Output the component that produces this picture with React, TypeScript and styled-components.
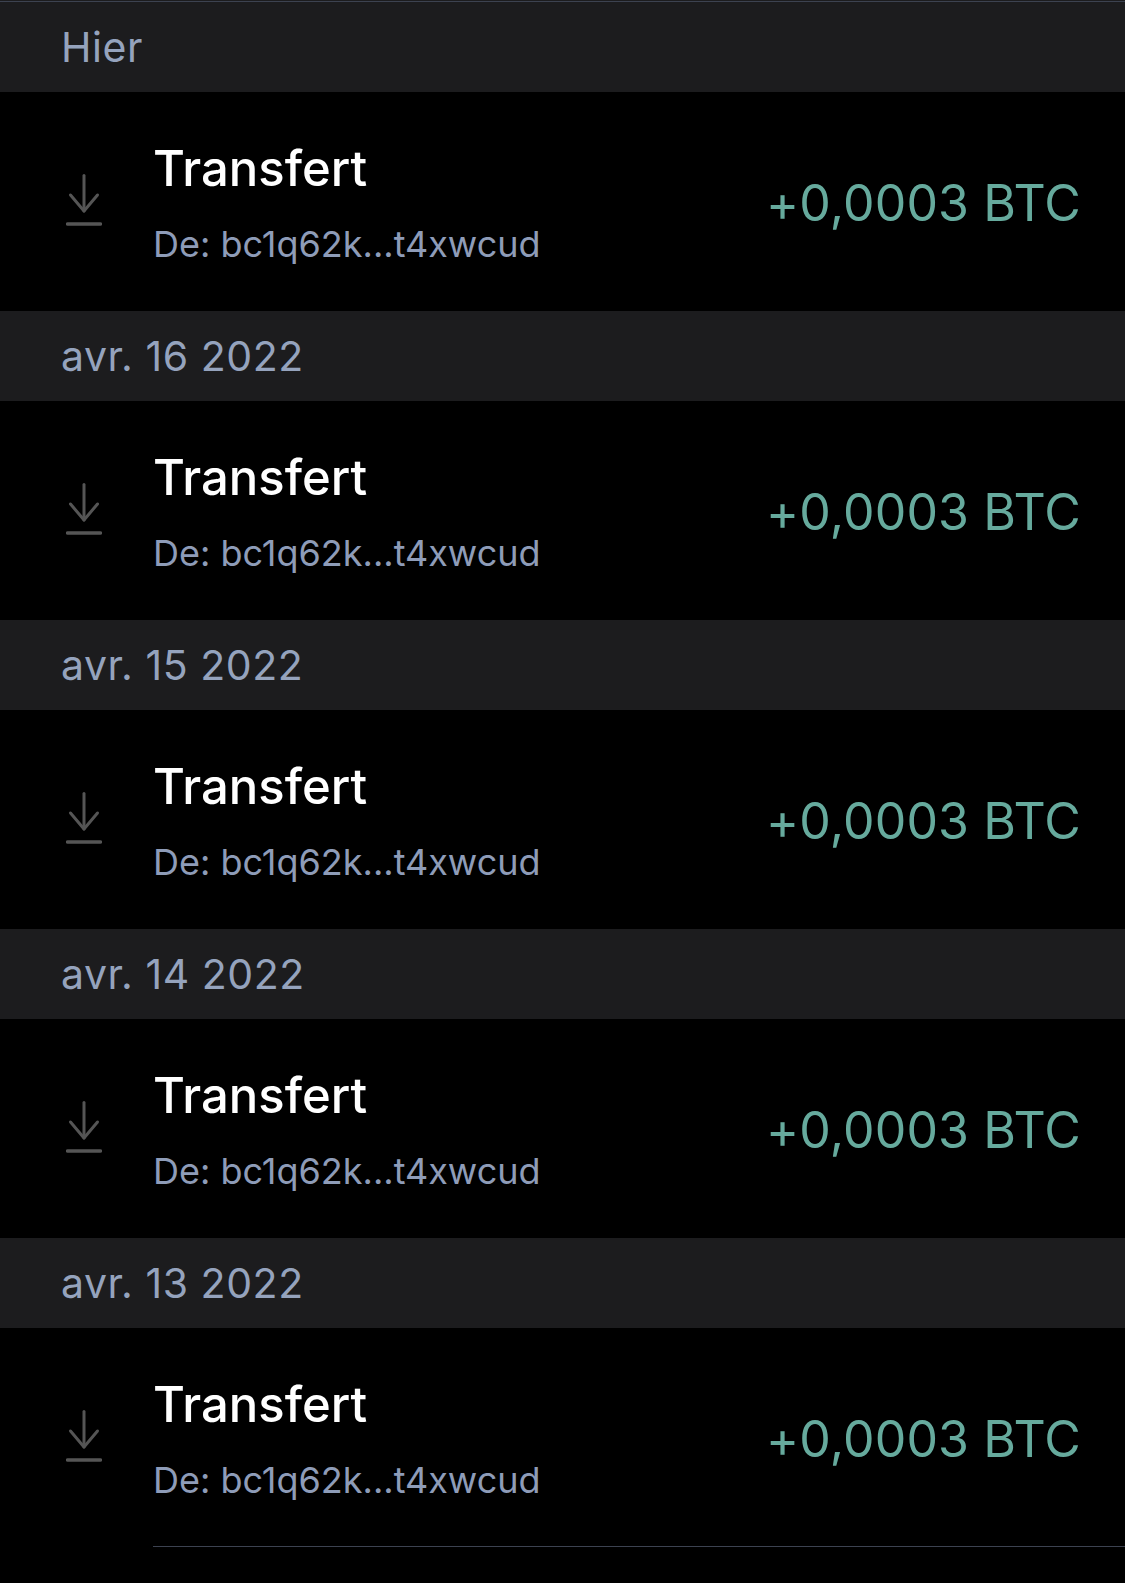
import { createGlobalStyle } from 'styled-components'
import styled from 'styled-components'

const GlobalStyle = createGlobalStyle`
  html, body {
    margin: 0;
    padding: 0;
    background: #000;
  }
  body {
    font-family: Inter, "Liberation Sans", sans-serif;
    -webkit-font-smoothing: antialiased;
  }
`

const Page = styled.div`
  width: 1125px;
  height: 1583px;
  overflow: hidden;
  background: #000;
  border-top: 1px solid #1c1c1e;
  box-sizing: border-box;
`

const TopLine = styled.div`
  height: 1px;
  background: #3c4250;
`

const DateHeader = styled.div`
  height: 90px;
  box-sizing: border-box;
  padding: 0 0 0 61px;
  display: flex;
  align-items: center;
  background: #1c1c1e;
  color: #95a3bd;
  font-size: 41px;
  letter-spacing: 0.55px;
`

const Row = styled.div`
  height: 219px;
  display: flex;
  align-items: center;
  padding: 0 44px 0 66px;
`

const IconBox = styled.div`
  width: 87px;
  flex-shrink: 0;
  display: flex;
  align-items: center;
  margin-bottom: 3px;
`

const Details = styled.div`
  flex: 1;
  display: flex;
  flex-direction: column;
`

const Title = styled.div`
  color: #fff;
  font-size: 49px;
  font-weight: 500;
  line-height: 58px;
  margin-top: 3px;
`

const Sender = styled.div`
  color: #8e9cb8;
  font-size: 36px;
  line-height: 44px;
  margin-top: 24px;
`

const Amount = styled.div`
  color: #66aa9d;
  font-size: 50px;
  letter-spacing: 0.15px;
  margin-top: 3px;
`

const Divider = styled.div`
  height: 1px;
  margin: -1px 0 0 153px;
  background: #3c4250;
`

const days = ['Hier', 'avr. 16 2022', 'avr. 15 2022', 'avr. 14 2022', 'avr. 13 2022']

function ReceiveIcon() {
  return (
    <svg width="36" height="52" viewBox="0 0 36 52" fill="none" stroke="#555" strokeWidth="3" strokeLinecap="round" strokeLinejoin="round">
      <path d="M18 1.5V37" />
      <path d="M4.5 21L18 37L31.5 21" />
      <path d="M1.5 50H34.5" strokeWidth="3.5" />
    </svg>
  )
}

export default function App() {
  return (
    <Page>
      <GlobalStyle />
      <TopLine />
      {days.map((day) => (
        <section key={day}>
          <DateHeader>{day}</DateHeader>
          <Row>
            <IconBox>
              <ReceiveIcon />
            </IconBox>
            <Details>
              <Title>Transfert</Title>
              <Sender>De: bc1q62k...t4xwcud</Sender>
            </Details>
            <Amount>+0,0003 BTC</Amount>
          </Row>
        </section>
      ))}
      <Divider />
    </Page>
  )
}
